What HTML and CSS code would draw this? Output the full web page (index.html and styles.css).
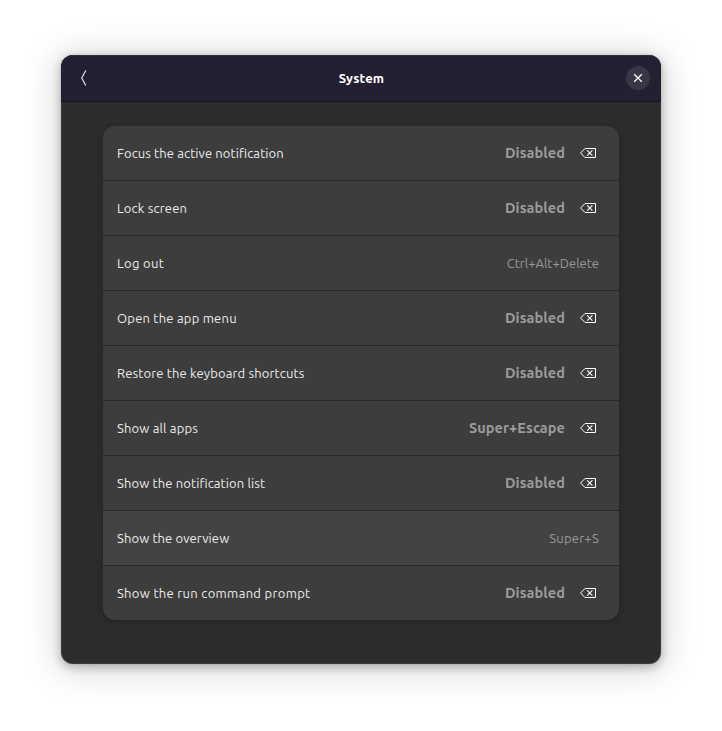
FILE: index.html
```
<!DOCTYPE html>
<html lang="en">
<head>
<meta charset="utf-8">
<title>System</title>
<link rel="stylesheet" href="styles.css">
</head>
<body>
<svg class="defs" width="0" height="0" aria-hidden="true">
  <symbol id="erase" viewBox="0 0 18 12">
    <path d="M6 1.5H16.5V10.5H6L1.6 6Z" fill="none" stroke="currentColor" stroke-width="1"/>
    <path d="M8.2 3.4L13.4 8.6M13.4 3.4L8.2 8.6" fill="none" stroke="currentColor" stroke-width="1.1"/>
  </symbol>
</svg>
<main class="window">
  <header class="titlebar">
    <button class="back" aria-label="Back"><svg width="8" height="18" viewBox="0 0 8 18"><path d="M5.8 1.5L1.7 9L5.8 16.5" fill="none" stroke="currentColor" stroke-width="1.2"/></svg></button>
    <h1 class="title">System</h1>
    <button class="close" aria-label="Close"><svg width="10" height="10" viewBox="0 0 10 10"><path d="M1.2 1.2L8.8 8.8M8.8 1.2L1.2 8.8" fill="none" stroke="currentColor" stroke-width="1.3"/></svg></button>
  </header>
  <ul class="list">
    <li class="row"><span class="label l1">Focus the active notification</span><span class="custom">Disabled</span><svg class="erase"><use href="#erase"/></svg></li>
    <li class="row"><span class="label l2">Lock screen</span><span class="custom">Disabled</span><svg class="erase"><use href="#erase"/></svg></li>
    <li class="row"><span class="label l3">Log out</span><span class="default">Ctrl+Alt+Delete</span></li>
    <li class="row"><span class="label l4">Open the app menu</span><span class="custom">Disabled</span><svg class="erase"><use href="#erase"/></svg></li>
    <li class="row"><span class="label l5">Restore the keyboard shortcuts</span><span class="custom">Disabled</span><svg class="erase"><use href="#erase"/></svg></li>
    <li class="row"><span class="label l6">Show all apps</span><span class="custom">Super+Escape</span><svg class="erase"><use href="#erase"/></svg></li>
    <li class="row"><span class="label l7">Show the notification list</span><span class="custom">Disabled</span><svg class="erase"><use href="#erase"/></svg></li>
    <li class="row hover"><span class="label l8">Show the overview</span><span class="default short">Super+S</span></li>
    <li class="row"><span class="label l9">Show the run command prompt</span><span class="custom">Disabled</span><svg class="erase"><use href="#erase"/></svg></li>
  </ul>
</main>
</body>
</html>
```
FILE: styles.css
```
* { box-sizing: border-box; }
body {
  margin: 0;
  height: 731px;
  padding: 55px 61px 67px;
  background: #fff;
  font-family: Ubuntu, "Noto Sans", sans-serif;
  font-size: 13px;
  overflow: hidden;
}
.defs { display: block; height: 0; }
.window {
  width: 600px;
  height: 609px;
  border-radius: 12px;
  overflow: hidden;
  background: #2c2c2c;
  box-shadow: inset 0 0 0 1px rgba(255,255,255,.07), 0 3px 10px 1px rgba(0,0,0,.22), 0 3px 34px 5px rgba(0,0,0,.15), 0 0 0 1px rgba(0,0,0,.05);
}
.titlebar {
  display: grid;
  grid-template-columns: 24px 1fr 24px;
  align-items: center;
  height: 47px;
  padding: 0 11px;
  background: #241f31;
  border-bottom: 1px solid #17131f;
  box-shadow: inset 0 1px #34313f;
  color: #fff;
}
.back, .close {
  display: flex;
  align-items: center;
  justify-content: center;
  width: 24px;
  height: 24px;
  padding: 0;
  border: 0;
  background: none;
  color: #e4e3e7;
}
.close { border-radius: 50%; background: #3a3646; color: #fff; }
.title { margin: 0; padding-left: 1px; text-align: center; font-size: 13px; font-weight: 600; line-height: 20px; letter-spacing: .2px; }
.list {
  width: 516px;
  margin: 24px 0 0 42px;
  padding: 0;
  list-style: none;
  border-radius: 12px;
  overflow: hidden;
  background: #3d3d3d;
  box-shadow: 0 1px 3px 1px rgba(0,0,0,.1), 0 2px 6px 2px rgba(0,0,0,.04);
}
.row {
  display: flex;
  align-items: center;
  height: 55px;
  padding: 0 20px 0 14px;
  border-bottom: 1px solid #282828;
  white-space: nowrap;
}
.row:last-child { height: 54px; border-bottom: 0; }
.hover { background: #434343; }
.label { margin-right: auto; color: #ebebeb; font-feature-settings: "liga" 1; }
.l1 { letter-spacing: .1px; }
.l2 { letter-spacing: .18px; }
.l3 { letter-spacing: .36px; }
.l4 { letter-spacing: .22px; }
.l5 { letter-spacing: .14px; }
.l6 { letter-spacing: .16px; }
.l7 { letter-spacing: .12px; }
.l8 { letter-spacing: .1px; }
.l9 { letter-spacing: .31px; }
.default { color: #999; }
.short { letter-spacing: .25px; }
.custom { padding-bottom: 2px; color: #9b9b9b; font-size: 14.5px; font-weight: 600; letter-spacing: .08px; }
.erase { width: 18px; height: 12px; margin: 0 2px 0 14px; color: #fff; }
```
